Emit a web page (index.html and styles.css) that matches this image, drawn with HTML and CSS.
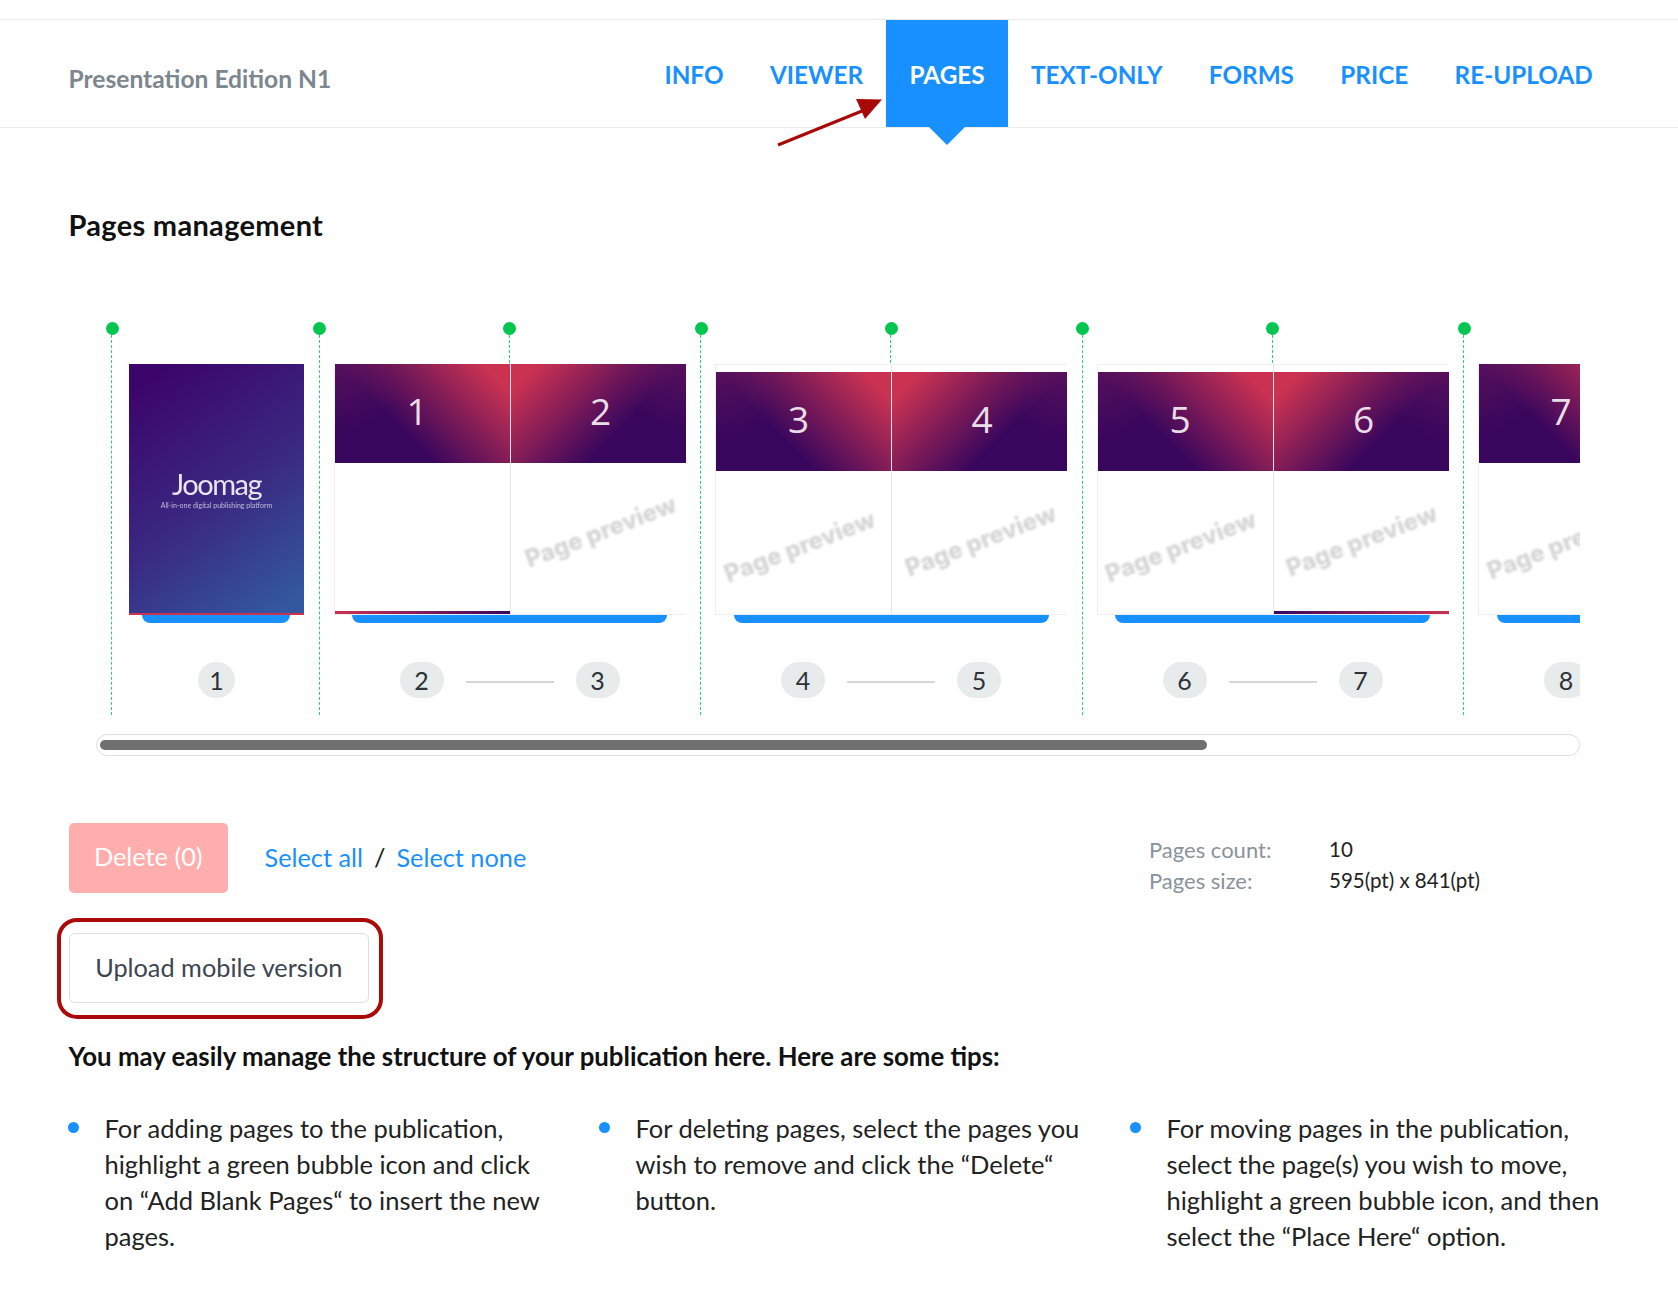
FILE: index.html
```html
<!DOCTYPE html>
<html>
<head>
  <meta charset="utf-8">
  <meta name="viewport" content="width=device-width, initial-scale=1">
  <title>Pages management</title>
  <link rel="stylesheet" href="styles.css">
</head>
<body>
  <header class="topbar">
    <div class="edition">Presentation Edition N1</div>
    <nav class="tabs">
      <a>INFO</a>
      <a>VIEWER</a>
      <a class="active">PAGES</a>
      <a>TEXT-ONLY</a>
      <a>FORMS</a>
      <a>PRICE</a>
      <a>RE-UPLOAD</a>
    </nav>
  </header>

  <!-- red annotation arrow pointing at the active tab -->
  <svg class="arrow" width="120" height="60" viewBox="0 0 120 60">
    <path d="M8 55L92 21" stroke="#a80808" stroke-width="3" fill="none"/>
    <path d="M112 9.500L86 9L95 29Z" fill="#a80808"/>
  </svg>

  <main>
    <h2 class="title">Pages management</h2>

    <div class="gallery">
      <div class="track">

        <div class="slot single">
          <span class="marker full"><i></i></span>
          <div class="sheet">
            <div class="page cover">
              <div class="logo">Joomag</div>
              <div class="tagline">All-in-one digital publishing platform</div>
            </div>
          </div>
          <div class="bar"></div>
          <div class="nums"><b>1</b></div>
        </div>

        <div class="slot upper">
          <span class="marker full"><i></i></span>
          <span class="marker mid"><i></i></span>
          <div class="sheet">
            <div class="page left strip-left">
              <div class="banner"><span>1</span></div>
              <div class="blank"></div>
            </div>
            <div class="page right">
              <div class="banner"><span>2</span></div>
              <div class="blank"><em>Page preview</em></div>
            </div>
          </div>
          <div class="bar"></div>
          <div class="nums"><b>2</b><s></s><b>3</b></div>
        </div>

        <div class="slot lower">
          <span class="marker full"><i></i></span>
          <span class="marker mid"><i></i></span>
          <div class="sheet">
            <div class="page left">
              <div class="banner"><span>3</span></div>
              <div class="blank"><em>Page preview</em></div>
            </div>
            <div class="page right">
              <div class="banner"><span>4</span></div>
              <div class="blank"><em>Page preview</em></div>
            </div>
          </div>
          <div class="bar"></div>
          <div class="nums"><b>4</b><s></s><b>5</b></div>
        </div>

        <div class="slot lower">
          <span class="marker full"><i></i></span>
          <span class="marker mid"><i></i></span>
          <div class="sheet">
            <div class="page left">
              <div class="banner"><span>5</span></div>
              <div class="blank"><em>Page preview</em></div>
            </div>
            <div class="page right strip-right">
              <div class="banner"><span>6</span></div>
              <div class="blank"><em>Page preview</em></div>
            </div>
          </div>
          <div class="bar"></div>
          <div class="nums"><b>6</b><s></s><b>7</b></div>
        </div>

        <!-- only the left half of this spread is inside the strip -->
        <div class="slot cut">
          <span class="marker full"><i></i></span>
          <div class="sheet">
            <div class="page left">
              <div class="banner"><span>7</span></div>
              <div class="blank"><em>Page preview</em></div>
            </div>
          </div>
          <div class="bar"></div>
          <div class="nums"><b>8</b></div>
        </div>

      </div>
    </div>

    <div class="scrollbar"><div class="thumb"></div></div>

    <div class="actions">
      <button class="btn-delete">Delete (0)</button>
      <div class="select">
        <a>Select all</a><span>/</span><a>Select none</a>
      </div>
      <dl class="stats">
        <dt>Pages count:</dt><dd>10</dd>
        <dt>Pages size:</dt><dd>595(pt) x 841(pt)</dd>
      </dl>
    </div>

    <button class="btn-upload">Upload mobile version</button>

    <p class="lead">You may easily manage the structure of your publication here. Here are some tips:</p>

    <ul class="tips">
      <li>For adding pages to the publication, highlight a green bubble icon and click on “Add Blank Pages“ to insert the new pages.</li>
      <li>For deleting pages, select the pages you wish to remove and click the “Delete“ button.</li>
      <li>For moving pages in the publication, select the page(s) you wish to move, highlight a green bubble icon, and then select the “Place Here“ option.</li>
    </ul>
  </main>
</body>
</html>
```

FILE: styles.css
```css
body {
  margin: 0;
  padding-top: 19px;
  background: #fff;
  font-family: 'Lato', 'Liberation Sans', sans-serif;
  color: #1c1c1c;
}

/* top bar */
.topbar {
  display: flex;
  justify-content: space-between;
  height: 107px;
  padding: 0 62px 0 68.5px;
  border-top: 1px solid #e8eaec;
  border-bottom: 1px solid #e8eaec;
}
.edition {
  align-self: center;
  margin-top: 10px;
  font-size: 24.6px;
  font-weight: 700;
  color: #7c868e;
}
.tabs {
  display: flex;
}
.tabs a {
  position: relative;
  padding: 38px 23.2px 0;
  font-size: 24.3px;
  line-height: 34px;
  font-weight: 700;
  color: #1890ff;
}
.tabs a.active {
  background: #1890ff;
  color: #fff;
}
.tabs a.active:after {
  content: '';
  position: absolute;
  left: 50%;
  top: 100%;
  margin-left: -18px;
  border-top: 18px solid #1890ff;
  border-left: 18px solid transparent;
  border-right: 18px solid transparent;
}
.arrow {
  position: absolute;
  left: 770px;
  top: 90px;
}

/* pages strip */
main {
  padding-left: 68.5px;
}
.title {
  margin: 81px 0 0;
  font-size: 29px;
  line-height: 32px;
  font-weight: 700;
  letter-spacing: .3px;
  color: #111;
}
.gallery {
  width: 1484px;
  height: 395px;
  margin: 80px 0 0 27.5px;
  overflow: hidden;
}
.track {
  display: flex;
  gap: 29.5px;
  width: 2200px;
  padding: 43px 0 0 33px;
}
.slot {
  position: relative;
  width: 352px;
  flex: none;
}
.slot.single {
  width: 175px;
}
.marker {
  position: absolute;
  top: -42px;
  left: -14px;
  display: flex;
  flex-direction: column;
  align-items: center;
  width: 13px;
  margin-left: -6.5px;
}
.marker.mid {
  left: 50%;
}
.marker i {
  width: 13px;
  height: 13px;
  border-radius: 50%;
  background: #02c64f;
}
.marker:after {
  content: '';
  margin-left: -.5px;
  border-left: 1px dashed #2fd070;
}
.marker.full:after {
  height: 380px;
}
.marker.mid:after {
  height: 28px;
}
.slot.single .marker {
  left: -17px;
}
.sheet {
  display: flex;
  height: 251px;
}
.page {
  position: relative;
  display: flex;
  flex-direction: column;
  flex: 1;
  min-width: 0;
  overflow: hidden;
  border-bottom: 1px solid #eceeef;
}
.page.left {
  border-left: 1px solid #eceeef;
  border-right: 1px solid #e4e6e8;
}
.lower .page {
  padding-top: 7px;
  border-top: 1px solid #eceeef;
}
.banner {
  display: flex;
  flex: none;
  align-items: center;
  justify-content: center;
  height: 99px;
  color: #e9dee8;
  font-family: 'Open Sans', sans-serif;
  font-size: 37px;
  font-weight: 400;
}
.page.left .banner {
  padding: 0 10px 6px 0;
  box-sizing: border-box;
  background: radial-gradient(circle at 0 0, rgba(130, 30, 90, .4), transparent 70px),
    linear-gradient(45deg, #38065d 36%, #cb3252 90%);
}
.page.right .banner {
  padding: 0 0 7px 5px;
  box-sizing: border-box;
  background: radial-gradient(circle at 100% 0, rgba(130, 30, 90, .4), transparent 70px),
    linear-gradient(-45deg, #38065d 36%, #cb3252 90%);
}
.blank {
  display: flex;
  flex: 1;
  align-items: center;
  justify-content: center;
}
.blank em {
  font-family: 'Inter', sans-serif;
  font-size: 24px;
  font-style: normal;
  font-weight: 800;
  white-space: nowrap;
  color: #d6d6d6;
  transform: rotate(-21deg);
  filter: blur(.8px);
}
.upper .right em {
  margin: -14px 0 0 6px;
}
.lower .left em {
  margin: 8px 8px 0 0;
}
.lower .right em {
  margin: -4px 0 0 2px;
}
.cut .sheet {
  width: 176px;
}
.cut .left em {
  margin: 10px 6px 0 0;
}
.cut .nums {
  width: 176px;
}
.strip-left:after, .strip-right:after, .cover:after {
  content: '';
  position: absolute;
  left: 0;
  right: 0;
  bottom: 0;
  height: 3px;
}
.strip-left:after {
  background: linear-gradient(to right, #cb3252, #38065d);
}
.strip-right:after {
  background: linear-gradient(to right, #38065d, #cb3252);
}
.cover:after {
  height: 2px;
  background: #cb3252;
}
.page.cover {
  align-items: center;
  padding-top: 103px;
  border: 0;
  box-sizing: border-box;
  background: linear-gradient(145deg, #3c056c 8%, #3a2a82 55%, #33589f 94%);
  color: #e8e4f0;
}
.logo {
  font-size: 29px;
  line-height: 34px;
  font-weight: 400;
  letter-spacing: -1.5px;
  filter: blur(.3px);
}
.tagline {
  font-size: 7px;
  line-height: 9px;
  white-space: nowrap;
  opacity: .75;
  filter: blur(.3px);
}
.bar {
  height: 8px;
  margin: 0 18.5px;
  border-radius: 0 0 12px 12px;
  background: #1890ff;
}
.single .bar {
  margin: 0 14.500px 0 13px;
}
.nums {
  display: flex;
  align-items: center;
  justify-content: center;
  gap: 22px;
  margin-top: 39px;
}
.nums b {
  width: 44px;
  height: 36px;
  border-radius: 18px;
  background: #e8ebec;
  font-size: 25px;
  font-weight: 400;
  line-height: 36px;
  text-align: center;
  color: #2e3338;
}
.single .nums b {
  width: 37px;
}
.nums s {
  width: 88px;
  height: 2px;
  margin-top: 3px;
  background: #d5d8da;
}
.scrollbar {
  box-sizing: border-box;
  width: 1484px;
  height: 22px;
  margin: 18px 0 0 27.5px;
  padding: 4.500px 3px;
  border: 1.5px solid #dedede;
  border-radius: 11px;
}
.thumb {
  width: 1107px;
  height: 10px;
  border-radius: 5px;
  background: #707070;
}

/* controls */
.actions {
  display: flex;
  height: 70px;
  margin-top: 67px;
}
button {
  font-family: inherit;
  font-size: 25.3px;
  box-sizing: border-box;
}
.btn-delete {
  width: 159.500px;
  height: 70px;
  padding: 0 0 4px;
  border: 0;
  border-radius: 5px;
  background: #ffadad;
  color: #fff;
}
.select {
  display: flex;
  align-items: center;
  gap: 11px;
  margin: -2px 0 0 36.500px;
  font-size: 25.3px;
}
.select a {
  color: #1890ff;
}
.stats {
  display: grid;
  grid-template-columns: 180px auto;
  align-self: flex-start;
  width: 529px;
  margin: 11px 0 0 auto;
  font-size: 20.5px;
  line-height: 31px;
}
.stats dt {
  font-size: 22px;
  color: #8a939b;
}
.stats dd {
  margin: 0;
  color: #222;
}
.btn-upload {
  position: relative;
  display: block;
  width: 300.500px;
  height: 70px;
  margin-top: 40px;
  padding: 0 0 2px;
  border: 1.5px solid #dedede;
  border-radius: 6px;
  background: #fff;
  color: #3d4550;
}
.btn-upload:after {
  content: '';
  position: absolute;
  inset: -16px -15px -17px -13px;
  border: 4px solid #ab0a0a;
  border-radius: 20px;
}

/* tips */
.lead {
  margin: 37px 0 0;
  font-size: 25.8px;
  line-height: 32px;
  font-weight: 700;
  color: #111;
}
.tips {
  display: grid;
  grid-template-columns: repeat(3, 488px);
  gap: 43px;
  margin: 38px 0 0;
  padding: 0;
  list-style: none;
}
.tips li {
  position: relative;
  padding-left: 36px;
  font-size: 25.5px;
  line-height: 36px;
  color: #222;
}
.tips li:before {
  content: '';
  position: absolute;
  left: -1px;
  top: 12px;
  width: 11px;
  height: 11px;
  border-radius: 50%;
  background: #1890ff;
}
```
